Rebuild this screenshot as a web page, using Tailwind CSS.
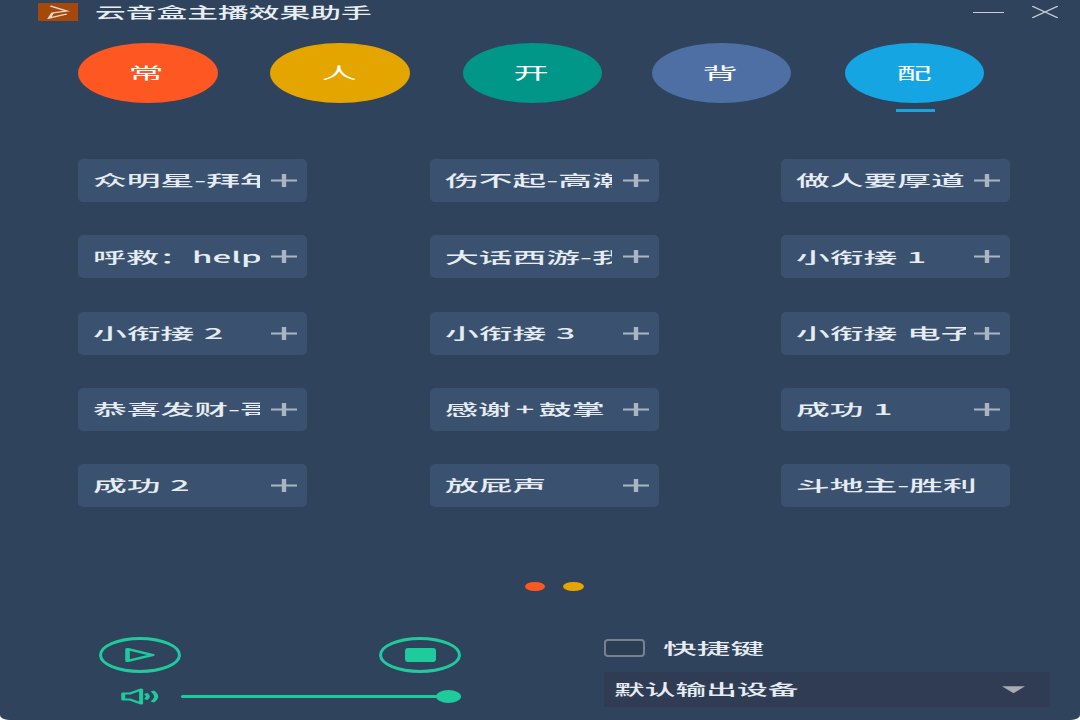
<!DOCTYPE html>
<html lang="zh">
<head>
    <meta charset="UTF-8">
    <title>云音盒主播效果助手</title>
    <script src="https://cdn.jsdelivr.net/npm/@tailwindcss/browser@4"></script>
</head>
<body class="bg-white font-['Noto_Sans_CJK_SC','Liberation_Sans',sans-serif]">
    <div class="w-[1080px] h-[720px] overflow-hidden flex flex-col bg-[#2f445c] rounded-bl-[9px_5px] rounded-br-[9px_5px] text-[#e8eef4]">
        <!-- title bar -->
        <div class="h-[24px] flex items-center pl-[38px]">
            <div class="w-[40px] h-[18px] bg-[#a4480c] flex items-center justify-center">
                <svg width="24" height="14" viewBox="0 0 11 14" fill="none" stroke="#ead9c8" stroke-width="1.3" preserveAspectRatio="none"><path d="M2 1 L9.5 6 L3 8 L1.5 13 L9.5 9" /></svg>
            </div>
            <div class="ml-[17px] w-[276px] text-[15px] font-medium leading-[24px] whitespace-nowrap origin-left scale-x-[2.05]">云音盒主播效果助手</div>
            <div class="ml-auto w-[31px] h-px bg-[#c8ced6]"></div>
            <svg class="ml-[28px] mr-[22px]" width="26" height="12" viewBox="0 0 26 12" fill="none" stroke="#c8ced6" stroke-width="1.2" preserveAspectRatio="none"><path d="M0 0 L26 12 M26 0 L0 12" /></svg>
        </div>

        <!-- tabs -->
        <div class="mt-[19px] ml-[78px] w-[906px] flex justify-between">
            <div class="w-[140px] h-[60px] rounded-[50%] bg-[#ff5722] flex items-center justify-center text-white text-[16px]"><span class="mr-[3px] mb-[2px] scale-x-[2.2]">常</span></div>
            <div class="w-[140px] h-[60px] rounded-[50%] bg-[#e5a500] flex items-center justify-center text-white text-[16px]"><span class="mr-[3px] mb-[2px] scale-x-[2.2]">人</span></div>
            <div class="w-[139px] h-[60px] rounded-[50%] bg-[#009688] flex items-center justify-center text-white text-[16px]"><span class="mr-[2px] mb-[2px] scale-x-[2.2]">开</span></div>
            <div class="w-[139px] h-[60px] ml-[-2px] mr-[2px] rounded-[50%] bg-[#4e6fa3] flex items-center justify-center text-white text-[16px]"><span class="mr-[2px] mb-[2px] scale-x-[2.2]">背</span></div>
            <div class="relative w-[139px] h-[60px] rounded-[50%] bg-[#16a5e3] flex items-center justify-center text-white text-[16px]">
                <span class="mr-[1px] mb-[2px] scale-x-[2.2]">配</span>
                <div class="absolute left-[51px] top-[66px] w-[39px] h-[3px] bg-[#16a5e3]"></div>
            </div>
        </div>

        <!-- effect list -->
        <div class="mt-[56px] ml-[78px] grid grid-cols-[repeat(3,229px)] auto-rows-[43px] gap-x-[122.5px] gap-y-[33.3px] text-[15px] font-medium text-[#e6ecf2] [word-spacing:1px]">
            <div class="bg-[#3a5270] rounded-[5px] flex items-center pl-[15px] pr-[10px]"><div class="w-[167px] overflow-hidden"><div class="whitespace-nowrap origin-left scale-x-[2.25]">众明星-拜年</div></div><svg class="ml-auto" width="26" height="13" viewBox="0 0 12 13" fill="none" stroke="#a9b5c2" stroke-width="2" preserveAspectRatio="none"><path d="M0 6.5 H12 M6 0 V13" /></svg></div>
            <div class="bg-[#3a5270] rounded-[5px] flex items-center pl-[15px] pr-[10px]"><div class="w-[167px] overflow-hidden"><div class="whitespace-nowrap origin-left scale-x-[2.25]">伤不起-高潮</div></div><svg class="ml-auto" width="26" height="13" viewBox="0 0 12 13" fill="none" stroke="#a9b5c2" stroke-width="2" preserveAspectRatio="none"><path d="M0 6.5 H12 M6 0 V13" /></svg></div>
            <div class="bg-[#3a5270] rounded-[5px] flex items-center pl-[15px] pr-[10px]"><div class="w-[170px] overflow-hidden"><div class="whitespace-nowrap origin-left scale-x-[2.25]">做人要厚道</div></div><svg class="ml-auto" width="26" height="13" viewBox="0 0 12 13" fill="none" stroke="#a9b5c2" stroke-width="2" preserveAspectRatio="none"><path d="M0 6.5 H12 M6 0 V13" /></svg></div>

            <div class="bg-[#3a5270] rounded-[5px] flex items-center pl-[15px] pr-[10px]"><div class="w-[167px] overflow-hidden"><div class="whitespace-nowrap origin-left scale-x-[2.2]">呼救：help</div></div><svg class="ml-auto" width="26" height="13" viewBox="0 0 12 13" fill="none" stroke="#a9b5c2" stroke-width="2" preserveAspectRatio="none"><path d="M0 6.5 H12 M6 0 V13" /></svg></div>
            <div class="bg-[#3a5270] rounded-[5px] flex items-center pl-[15px] pr-[10px]"><div class="w-[167px] overflow-hidden"><div class="whitespace-nowrap origin-left scale-x-[2.25]">大话西游-我</div></div><svg class="ml-auto" width="26" height="13" viewBox="0 0 12 13" fill="none" stroke="#a9b5c2" stroke-width="2" preserveAspectRatio="none"><path d="M0 6.5 H12 M6 0 V13" /></svg></div>
            <div class="bg-[#3a5270] rounded-[5px] flex items-center pl-[15px] pr-[10px]"><div class="w-[170px] overflow-hidden"><div class="whitespace-nowrap origin-left scale-x-[2.25]">小衔接 1</div></div><svg class="ml-auto" width="26" height="13" viewBox="0 0 12 13" fill="none" stroke="#a9b5c2" stroke-width="2" preserveAspectRatio="none"><path d="M0 6.5 H12 M6 0 V13" /></svg></div>

            <div class="bg-[#3a5270] rounded-[5px] flex items-center pl-[15px] pr-[10px]"><div class="w-[167px] overflow-hidden"><div class="whitespace-nowrap origin-left scale-x-[2.25]">小衔接 2</div></div><svg class="ml-auto" width="26" height="13" viewBox="0 0 12 13" fill="none" stroke="#a9b5c2" stroke-width="2" preserveAspectRatio="none"><path d="M0 6.5 H12 M6 0 V13" /></svg></div>
            <div class="bg-[#3a5270] rounded-[5px] flex items-center pl-[15px] pr-[10px]"><div class="w-[167px] overflow-hidden"><div class="whitespace-nowrap origin-left scale-x-[2.25]">小衔接 3</div></div><svg class="ml-auto" width="26" height="13" viewBox="0 0 12 13" fill="none" stroke="#a9b5c2" stroke-width="2" preserveAspectRatio="none"><path d="M0 6.5 H12 M6 0 V13" /></svg></div>
            <div class="bg-[#3a5270] rounded-[5px] flex items-center pl-[15px] pr-[10px]"><div class="w-[170px] overflow-hidden"><div class="whitespace-nowrap origin-left scale-x-[2.25]">小衔接 电子</div></div><svg class="ml-auto" width="26" height="13" viewBox="0 0 12 13" fill="none" stroke="#a9b5c2" stroke-width="2" preserveAspectRatio="none"><path d="M0 6.5 H12 M6 0 V13" /></svg></div>

            <div class="bg-[#3a5270] rounded-[5px] flex items-center pl-[15px] pr-[10px]"><div class="w-[167px] overflow-hidden"><div class="whitespace-nowrap origin-left scale-x-[2.25]">恭喜发财-哥</div></div><svg class="ml-auto" width="26" height="13" viewBox="0 0 12 13" fill="none" stroke="#a9b5c2" stroke-width="2" preserveAspectRatio="none"><path d="M0 6.5 H12 M6 0 V13" /></svg></div>
            <div class="bg-[#3a5270] rounded-[5px] flex items-center pl-[15px] pr-[10px]"><div class="w-[167px] overflow-hidden"><div class="whitespace-nowrap origin-left scale-x-[2.2]">感谢<span class="mx-[2px]">+</span>鼓掌</div></div><svg class="ml-auto" width="26" height="13" viewBox="0 0 12 13" fill="none" stroke="#a9b5c2" stroke-width="2" preserveAspectRatio="none"><path d="M0 6.5 H12 M6 0 V13" /></svg></div>
            <div class="bg-[#3a5270] rounded-[5px] flex items-center pl-[15px] pr-[10px]"><div class="w-[170px] overflow-hidden"><div class="whitespace-nowrap origin-left scale-x-[2.25]">成功 1</div></div><svg class="ml-auto" width="26" height="13" viewBox="0 0 12 13" fill="none" stroke="#a9b5c2" stroke-width="2" preserveAspectRatio="none"><path d="M0 6.5 H12 M6 0 V13" /></svg></div>

            <div class="bg-[#3a5270] rounded-[5px] flex items-center pl-[15px] pr-[10px]"><div class="w-[167px] overflow-hidden"><div class="whitespace-nowrap origin-left scale-x-[2.25]">成功 2</div></div><svg class="ml-auto" width="26" height="13" viewBox="0 0 12 13" fill="none" stroke="#a9b5c2" stroke-width="2" preserveAspectRatio="none"><path d="M0 6.5 H12 M6 0 V13" /></svg></div>
            <div class="bg-[#3a5270] rounded-[5px] flex items-center pl-[15px] pr-[10px]"><div class="w-[167px] overflow-hidden"><div class="whitespace-nowrap origin-left scale-x-[2.25]">放屁声</div></div><svg class="ml-auto" width="26" height="13" viewBox="0 0 12 13" fill="none" stroke="#a9b5c2" stroke-width="2" preserveAspectRatio="none"><path d="M0 6.5 H12 M6 0 V13" /></svg></div>
            <div class="bg-[#3a5270] rounded-[5px] flex items-center pl-[15px] pr-[10px]"><div class="w-[190px] overflow-hidden"><div class="whitespace-nowrap origin-left scale-x-[2.25]">斗地主-胜利</div></div></div>
        </div>

        <!-- pager -->
        <div class="mt-[75px] ml-[525px] flex gap-[18px]">
            <div class="w-[20px] h-[9px] rounded-[50%] bg-[#ff5722]"></div>
            <div class="w-[21px] h-[9px] rounded-[50%] bg-[#e5a500]"></div>
        </div>

        <!-- player -->
        <div class="mt-[46px] ml-[99px] flex">
            <div class="w-[362px]">
                <div class="flex justify-between">
                    <div class="w-[82px] h-[36px] rounded-[50%] border-[3px] border-[#1fcb9d] flex items-center justify-center">
                        <svg width="34" height="18" viewBox="0 0 15 18" fill="none" stroke="#1fcb9d" stroke-width="2" stroke-linejoin="round" preserveAspectRatio="none"><path d="M2 3 L13 9 L2 15 Z" /></svg>
                    </div>
                    <div class="w-[82px] h-[36px] rounded-[50%] border-[3px] border-[#1fcb9d] flex items-center justify-center">
                        <div class="w-[31px] h-[14px] rounded-[3px] bg-[#1fcb9d]"></div>
                    </div>
                </div>
                <div class="mt-[13px] h-[20px] flex items-center">
                    <svg class="ml-[22px]" width="38" height="17" viewBox="0 0 17 17" fill="none" stroke="#1fcb9d" stroke-width="1.8" stroke-linejoin="round" preserveAspectRatio="none"><path d="M1 5.5 H4 L9 1.5 V15.5 L4 11.5 H1 Z M11 5.5 Q13 8.5 11 11.5 M14 3 Q17.5 8.5 14 14" /></svg>
                    <div class="relative ml-[22px] flex-1 h-[3px] rounded-full bg-[#1fcb9d]">
                        <div class="absolute right-0 top-[-5px] w-[25px] h-[13px] rounded-[50%] bg-[#1fcb9d]"></div>
                    </div>
                </div>
            </div>

            <div class="ml-[143px] w-[446px]">
                <div class="flex items-center h-[24px] -mt-[1px]">
                    <div class="w-[41px] h-[18px] rounded-[4px] border-2 border-[#76828f] bg-[#2c3e54]"></div>
                    <div class="ml-[18px] text-[15px] font-medium text-[#e6ecf2] whitespace-nowrap origin-left scale-x-[2.25]">快捷键</div>
                </div>
                <div class="mt-[12px] h-[35px] bg-[#2f3c53] flex items-center pl-[10px] pr-[25px] text-[15px] font-medium text-[#e6ecf2]">
                    <div class="whitespace-nowrap origin-left scale-x-[2.05]">默认输出设备</div>
                    <div class="ml-auto w-[23px] h-[7px] bg-[#a8acb2] [clip-path:polygon(0_0,100%_0,50%_100%)]"></div>
                </div>
            </div>
        </div>
    </div>
</body>
</html>
